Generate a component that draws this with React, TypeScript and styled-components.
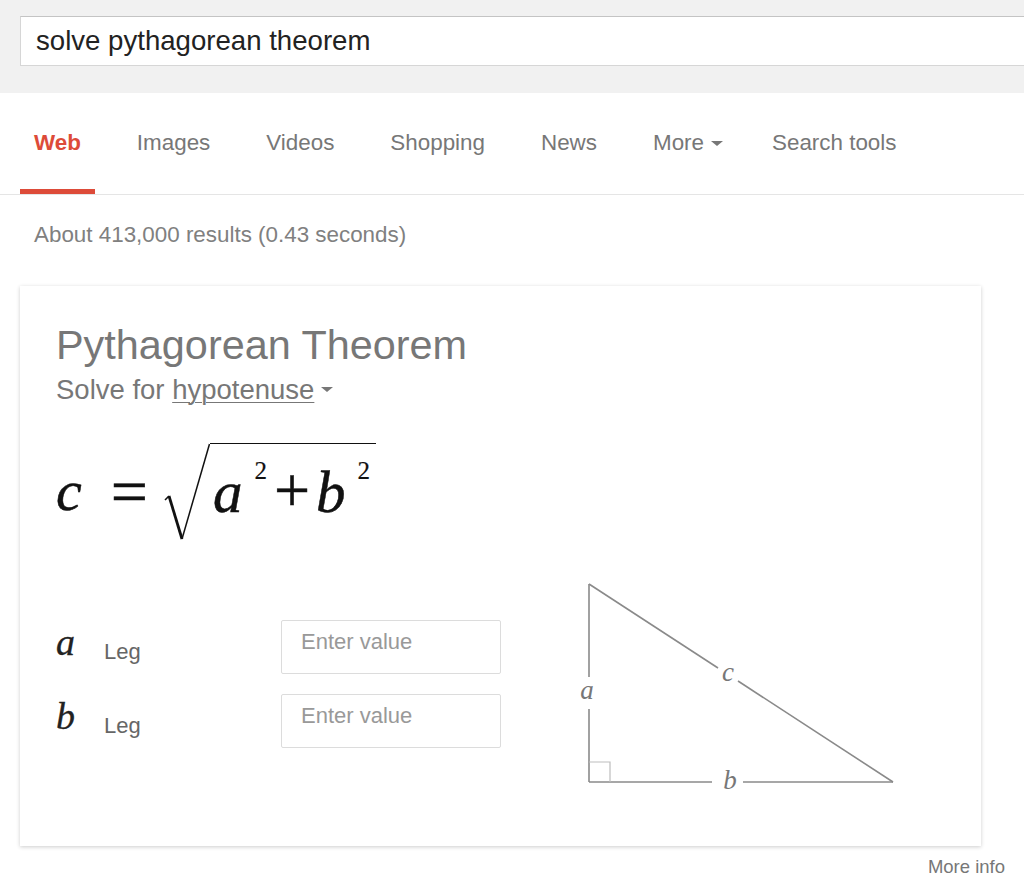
import styled, { createGlobalStyle } from "styled-components";

const GlobalStyle = createGlobalStyle`
  body {
    margin: 0;
    background: #fff;
    font-family: "Liberation Sans", Arial, sans-serif;
    overflow-x: hidden;
  }
`;

const tabs = ["Web", "Images", "Videos", "Shopping", "News", "More", "Search tools"];

const App = () => {
  return (
    <Page>
      <GlobalStyle />
      <Header>
        <SearchBox>solve pythagorean theorem</SearchBox>
      </Header>

      <TabBar>
        {tabs.map((t) => (
          <Tab key={t} active={t === "Web"}>
            {t}
            {t === "More" ? <Caret /> : null}
          </Tab>
        ))}
      </TabBar>

      <Stats>About 413,000 results (0.43 seconds)</Stats>

      <Card>
        <Title>Pythagorean Theorem</Title>
        <Subtitle>
          Solve for <SolveLink>hypotenuse</SolveLink>
          <Caret />
        </Subtitle>

        <Formula>
          <MathVar>c</MathVar>
          <MathOp>=</MathOp>
          <Root>
            <svg width="46" height="97" viewBox="0 0 46 97">
              <path d="M1 57 L5 53" stroke="#111" strokeWidth="1.6" fill="none" />
              <path d="M5 53 L18 96" stroke="#111" strokeWidth="2.8" fill="none" />
              <path d="M18 96 L45.5 1" stroke="#111" strokeWidth="1.5" fill="none" />
            </svg>
            <Radicand>
              <RadVar>a</RadVar>
              <Sup>2</Sup>
              <Plus>+</Plus>
              <RadVar>b</RadVar>
              <Sup>2</Sup>
            </Radicand>
          </Root>
        </Formula>

        <Body>
          <Inputs>
            <Row>
              <VarName>a</VarName>
              <Leg>Leg</Leg>
              <ValueInput placeholder="Enter value" />
            </Row>
            <Row>
              <VarName>b</VarName>
              <Leg>Leg</Leg>
              <ValueInput placeholder="Enter value" />
            </Row>
          </Inputs>

          <Diagram width="330" height="225" viewBox="0 0 330 225">
            <g stroke="#8a8a8a" strokeWidth="1.6" fill="none">
              <line x1="14" y1="10" x2="14" y2="103" />
              <line x1="14" y1="135" x2="14" y2="208" />
              <line x1="14" y1="208" x2="137" y2="208" />
              <line x1="168" y1="208" x2="318" y2="208" />
              <line x1="14" y1="10" x2="143" y2="94" />
              <line x1="163" y1="107" x2="318" y2="208" />
            </g>
            <path d="M14 188 H35 V208" stroke="#bdbdbd" strokeWidth="1.2" fill="none" />
            <DiagramLabel x="12" y="125">a</DiagramLabel>
            <DiagramLabel x="153" y="107">c</DiagramLabel>
            <DiagramLabel x="155" y="215">b</DiagramLabel>
          </Diagram>
        </Body>
      </Card>

      <MoreInfo>More info</MoreInfo>
    </Page>
  );
};

export default App;

const Page = styled.div`
  width: 1024px;
  min-height: 883px;
  overflow: hidden;
`;

const Header = styled.div`
  height: 93px;
  background: #f1f1f1;
  padding: 16px 0 0 20px;
  box-sizing: border-box;
`;

const SearchBox = styled.div`
  width: 1040px;
  height: 50px;
  box-sizing: border-box;
  background: #fff;
  border: 1px solid #d6d6d6;
  border-top-color: #c4c4c4;
  padding-left: 15px;
  font-size: 27.6px;
  line-height: 48px;
  color: #222;
`;

const TabBar = styled.div`
  display: flex;
  height: 102px;
  box-sizing: border-box;
  padding-left: 20px;
  border-bottom: 1px solid #e5e5e5;
`;

const Tab = styled.div<{ active?: boolean }>`
  display: flex;
  align-items: flex-start;
  padding: 37px 14px 0;
  margin-right: 28px;
  height: 101px;
  box-sizing: border-box;
  font-size: 22.4px;
  line-height: 26px;
  font-weight: ${(p) => (p.active ? "bold" : "normal")};
  color: ${(p) => (p.active ? "#dd4b39" : "#777")};
  border-bottom: 5px solid ${(p) => (p.active ? "#dd4b39" : "transparent")};
  white-space: nowrap;
`;

const Caret = styled.span`
  display: inline-block;
  width: 0;
  height: 0;
  margin: 0 0 0 7px;
  border-left: 6px solid transparent;
  border-right: 6px solid transparent;
  border-top: 5px solid #777;
  vertical-align: middle;
  position: relative;
  top: -2px;

  ${Tab} & {
    margin: 11px -7px 0 7px;
    top: 0;
  }
`;

const Stats = styled.div`
  margin-top: 27px;
  padding-left: 34px;
  font-size: 22.4px;
  line-height: 26px;
  color: #808080;
`;

const Card = styled.div`
  margin: 38px 0 0 20px;
  width: 961px;
  height: 560px;
  box-sizing: border-box;
  padding: 35px 36px 0;
  background: #fff;
  box-shadow: 0 1px 4px rgba(0, 0, 0, 0.2);
`;

const Title = styled.div`
  font-size: 41.4px;
  line-height: 48px;
  color: #777;
`;

const Subtitle = styled.div`
  margin-top: 5px;
  font-size: 27.5px;
  line-height: 32px;
  color: #777;
`;

const SolveLink = styled.span`
  text-decoration: underline;
  text-decoration-thickness: 1px;
  text-underline-offset: 3px;
`;

const Formula = styled.div`
  display: flex;
  align-items: flex-start;
  margin-top: 37px;
  height: 96px;
  font-family: "Liberation Serif", "Times New Roman", serif;
  color: #111;
  -webkit-text-stroke: 0.5px #111;
`;

const MathVar = styled.span`
  padding-top: 18px;
  font-size: 58px;
  line-height: 60px;
  font-style: italic;
`;

const MathOp = styled.span`
  padding-top: 19px;
  margin-left: 29px;
  font-size: 66px;
  line-height: 60px;
`;

const Root = styled.span`
  display: flex;
  align-items: flex-start;
  margin-left: 16px;

  svg {
    display: block;
  }
`;

const Radicand = styled.span`
  border-top: 1.5px solid #111;
  padding: 17px 6px 0 3px;
  line-height: 60px;
  white-space: nowrap;
`;

const RadVar = styled.span`
  font-size: 59px;
  font-style: italic;
`;

const Sup = styled.span`
  font-size: 25px;
  line-height: 0;
  vertical-align: 33px;
  margin-left: 12px;
  -webkit-text-stroke: 0.2px #111;
`;

const Plus = styled.span`
  font-size: 64px;
  margin: 0 6px 0 7px;
`;

const Body = styled.div`
  display: flex;
  align-items: flex-start;
`;

const Inputs = styled.div`
  width: 445px;
  padding-top: 81px;
  display: flex;
  flex-direction: column;
  gap: 20px;
`;

const Row = styled.div`
  display: flex;
  align-items: center;
  height: 54px;
`;

const VarName = styled.span`
  width: 48px;
  padding-bottom: 10px;
  font-family: "Liberation Serif", "Times New Roman", serif;
  font-style: italic;
  font-size: 38px;
  line-height: 40px;
  color: #222;
  -webkit-text-stroke: 0.3px #222;
`;

const Leg = styled.span`
  width: 177px;
  padding-top: 10px;
  font-size: 22px;
  line-height: 26px;
  color: #666;
`;

const ValueInput = styled.input`
  width: 220px;
  height: 54px;
  box-sizing: border-box;
  border: 1px solid #dcdcdc;
  border-radius: 2px;
  padding: 0 19px 10px;
  font-family: "Liberation Sans", Arial, sans-serif;
  font-size: 22px;
  color: #222;
  outline: none;

  &::placeholder {
    color: #999;
  }
`;

const Diagram = styled.svg`
  display: block;
  margin: 35px 0 0 74px;
`;

const DiagramLabel = styled.text`
  font-family: "Liberation Serif", "Times New Roman", serif;
  font-style: italic;
  font-size: 27px;
  fill: #777;
  text-anchor: middle;
`;

const MoreInfo = styled.div`
  margin-top: 10px;
  padding-right: 19px;
  text-align: right;
  font-size: 18.5px;
  line-height: 22px;
  color: #777;
`;
